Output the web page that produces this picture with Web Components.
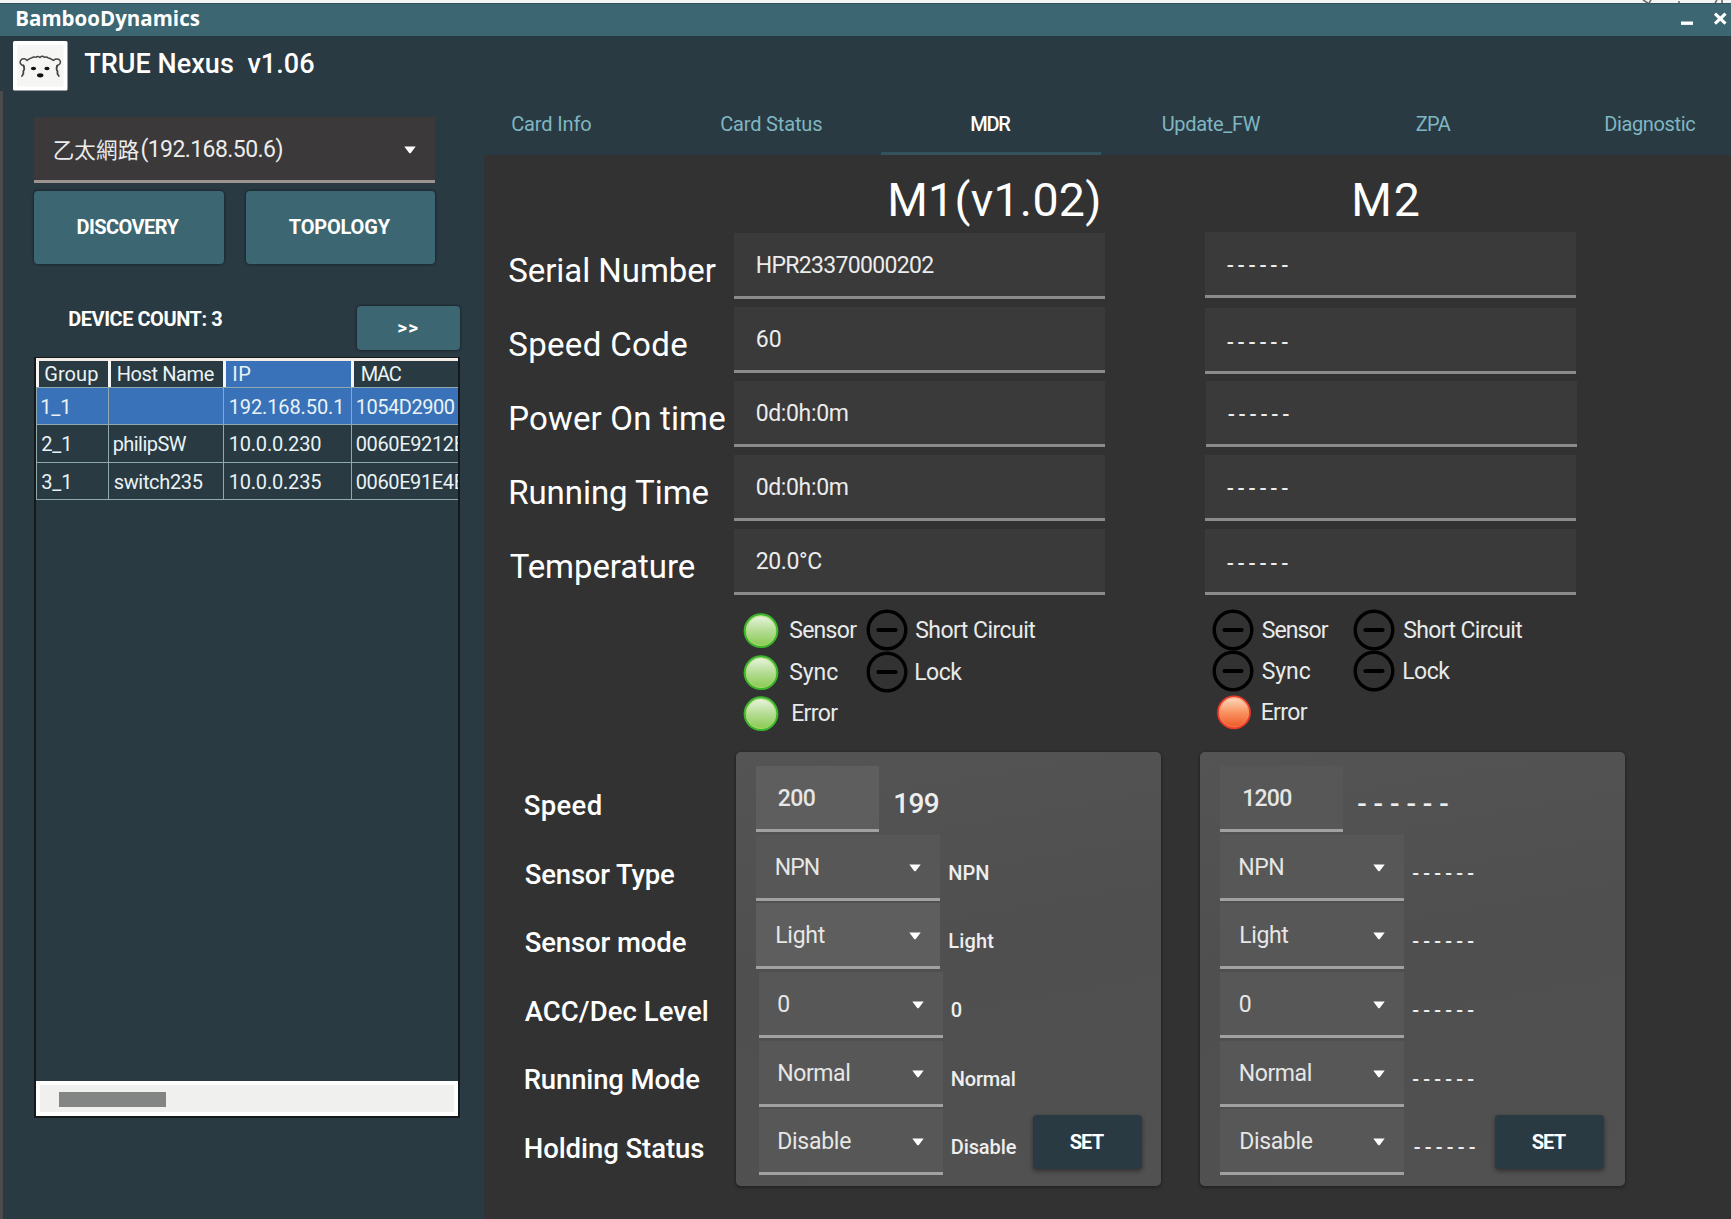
<!DOCTYPE html>
<html lang="zh-Hant">
<head>
<meta charset="utf-8">
<title>TRUE Nexus</title>
<style>
html,body{margin:0;height:100%;background:#323232}
body{font-family:Roboto,"Noto Sans CJK TC",sans-serif;color:#fff;overflow:hidden}
</style>
</head>
<body>
<nexus-app></nexus-app>
<script>
const define = (name, html, setup) => {
  const tpl = document.createElement('template');
  tpl.innerHTML = html;
  customElements.define(name, class extends HTMLElement {
    constructor() {
      super();
      this.attachShadow({mode: 'open'});
    }
    connectedCallback() {
      if (this.ready) return;
      this.ready = true;
      this.shadowRoot.append(tpl.content.cloneNode(true));
      if (setup) setup(this, this.shadowRoot);
    }
  });
};

const pen = document.createElement('canvas').getContext('2d');

/* One line of text. x: ink offset, w: ink width, base: baseline below the top, size and weight of the font. */
define('nx-text', `<style>
:host{display:block;white-space:pre;flex:none}
</style><span></span>`, (el, root) => {
  const a = n => el.getAttribute(n);
  const size = +a('size') || 20, weight = a('weight') || 400, face = a('face') || 'Roboto';
  const text = a('text'), base = +a('base');
  pen.font = `${weight} ${size}px "${face}", "Noto Sans CJK TC", sans-serif`;
  const m = pen.measureText(text);
  const ink = m.actualBoundingBoxLeft + m.actualBoundingBoxRight;
  const n = [...text].length;
  let gap = 0;
  if (a('w') && n > 1) gap = (+a('w') - ink) / (n - 1);
  const shift = face === 'Roboto' ? 0.342 : 0.388;
  const s = el.style;
  s.font = `${weight} ${size}px/${2 * (base - shift * size)}px "${face}", "Noto Sans CJK TC", sans-serif`;
  s.letterSpacing = gap + 'px';
  s.marginRight = -gap + 'px';
  s.marginLeft = (+a('x') || 0) + 0.2 + m.actualBoundingBoxLeft + 'px';
  if (a('color')) s.color = a('color');
  root.querySelector('span').textContent = text;
});

define('nx-arrow', `<style>:host{display:block;flex:none}svg{display:block}</style>
<svg width="12" height="8" viewBox="0 0 12 8"><path d="M.3.6h11.4L7 6.8q-1 1-2 0z" fill="#fff"/></svg>`);

define('nx-field', `<style>
:host{display:flex;box-sizing:border-box;flex:none;height:66px;align-items:flex-start;background:var(--bg,#3a3a3a);border-bottom:3px solid var(--line,#8b8b8b);color:#ececec}
nx-arrow{margin:29px 19px 0 auto}
:host(:not([select])) nx-arrow{display:none}
</style><slot></slot><nx-arrow></nx-arrow>`);

define('nx-button', `<style>
:host{display:flex;box-sizing:border-box;flex:none;border-radius:4px;background:#3c6671;box-shadow:0 0 2px 1px rgba(20,28,32,.55);align-items:flex-start}
:host([dark]){background:#2a3a42;box-shadow:0 2px 4px rgba(30,25,25,.6)}
</style><slot></slot>`);

define('nx-led', `<style>:host{display:block;flex:none;width:42px;height:41px}svg{display:block}</style>
<svg width="42" height="41" viewBox="0 0 42 41" overflow="visible">
<defs>
<linearGradient id="g" x2="0" y2="1"><stop offset="0" stop-color="#eef6e4"/><stop offset=".5" stop-color="#b5dc94"/><stop offset="1" stop-color="#86c94c"/></linearGradient>
<linearGradient id="r" x2="0" y2="1"><stop offset="0" stop-color="#ffe0c8"/><stop offset=".5" stop-color="#f8935f"/><stop offset="1" stop-color="#ee5426"/></linearGradient>
</defs><g></g></svg>`, (el, root) => {
  const k = el.getAttribute('kind');
  root.querySelector('g').innerHTML =
    k === 'off' ? '<circle cx="21" cy="20" r="18.8" fill="none" stroke="#000" stroke-width="3.4"/><path d="M12.500 20h17" stroke="#000" stroke-width="4.2" stroke-linecap="round"/>'
    : k === 'ok' ? '<circle cx="21" cy="20.7" r="16.3" fill="url(#g)" stroke="#3cb52c" stroke-width="2.2"/><circle cx="21" cy="20.7" r="14.7" fill="none" stroke="#a6dc70" stroke-width="1.2" opacity=".7"/>'
    : '<circle cx="22" cy="20.400" r="16" fill="url(#r)" stroke="#e8392b" stroke-width="1.8"/><circle cx="22" cy="20.400" r="14.5" fill="none" stroke="#ff8a55" stroke-width="1" opacity=".6"/>';
});

define('title-bar', `<style>
:host{display:flex;box-sizing:border-box;height:36px;background:#3c6671;border-top:3px solid #f4f4f4;align-items:flex-start;flex:none;box-shadow:inset 0 1px #31545f}
svg{display:block;margin-left:auto;margin-top:-3px}
</style>
<nx-text face="Open Sans" size="20.500" weight="700" x="16" w="183.500" base="23" text="BambooDynamics"></nx-text>
<svg width="131" height="36" viewBox="0 0 131 36"><path d="M43 0l5 3M51 0l-2 3M117 0l-2 3M122 0v3M78 2h2" stroke="#6e6a6a" stroke-width="1.6"/><path d="M81 23.200h12" stroke="#fff" stroke-width="3.4"/><path d="M115 13.700l10.500 10m0-10L115 23.700" stroke="#fff" stroke-width="3.200"/></svg>`);

define('app-header', `<style>
:host{display:flex;height:55px;background:#2a3a42;align-items:flex-start;flex:none}
svg{display:block;margin:5px 0 0 13px}
</style>
<svg width="55" height="50" viewBox="0 0 55 50"><rect width="54.500" height="49.500" rx="1.500" fill="#fff"/><rect x="4" y="4" width="46.500" height="41.500" fill="#f5f5f4"/>
<g fill="none" stroke="#444" stroke-width="1.500" stroke-linecap="round" stroke-linejoin="round">
<path d="M10.500 24.500c-3-.5-4.500-3.500-2.500-5.500s5-1.200 6 .5c1.500-1 3-2.500 5-2.800 1.500-1.200 3.200-.5 4-.5 1.200-1.200 2.800-1 4 .3 1.500-1.500 3-1.500 4.300-.3 1.500-.5 3-.3 4 .8 2 .2 3.500 1.500 5 2.500 1.500-1.700 4.500-2.300 6.300-.5s.5 5-2.300 5.500"/>
<path d="M10.500 24.500c1 2 1 4-.2 5.800.5 1.700 0 3.300-1.300 4.700M44.300 24.500c-1 2-1 4 .2 5.800-.5 1.700 0 3.300 1.300 4.700" stroke-width="1.800"/></g>
<g fill="#111"><ellipse cx="20.500" cy="27.500" rx="2.600" ry="1.700"/><ellipse cx="34" cy="27.500" rx="2.600" ry="1.700"/><ellipse cx="27.200" cy="34.300" rx="3.200" ry="2.100"/></g></svg>
<nx-text size="27" weight="500" x="16" w="230" base="37.500" text="TRUE Nexus  v1.06"></nx-text>`);

define('device-table', `<style>
:host{display:flex;flex-direction:column;box-sizing:border-box;width:426px;height:761px;border:2px solid #15191b;border-top-width:1px;background:#2a3a42;overflow:hidden;color:#e9f3f5}
.grid{display:flex;flex-direction:column;flex:1;border-top:3px solid #f3ece6}
.r{display:grid;grid-template-columns:72px 115px 128px 108px;height:36px;border-bottom:1px solid #8fa9ad}
.rows .r{height:36.300px}
.r>div{border-left:1.500px solid #8fa9ad;overflow:hidden;display:flex;align-items:flex-start}
.h{height:26px}.h>div{border-left:3px solid #f5f5f5}
.sel{background:#3a72b9}
.sb{height:35px;box-sizing:border-box;background:#f0f0ef;border:4px solid #fff;padding:7px 0 0 18.500px}
.sb i{display:block;width:107px;height:15px;background:#838584}
</style>
<div class="grid">
<div class="r h"><div><nx-text x="6" w="53" base="20" text="Group"></nx-text></div><div><nx-text x="6.500" w="96" base="20" text="Host Name"></nx-text></div><div class="sel"><nx-text x="7" w="17" base="20" text="IP"></nx-text></div><div><nx-text x="7.500" w="40" base="20" text="MAC"></nx-text></div></div>
<div class="rows"></div></div><div class="sb"><i></i></div>`, (el, root) => {
  const rows = [
    [['1_1', 27], ['', 0], ['192.168.50.1', 111.5], ['1054D2900', 98]],
    [['2_1', 28], ['philipSW', 73], ['10.0.0.230', 91.5], ['0060E9212B', 109]],
    [['3_1', 28], ['switch235', 89], ['10.0.0.235', 91.5], ['0060E91E4B', 109]]];
  root.querySelector('.rows').innerHTML = rows.map((r, i) =>
    `<div class="r${i ? '' : ' sel'}">` + r.map(([t, w], c) =>
      `<div>${t ? `<nx-text x="${[4, 4.500, 5.500, 4.500][c]}" w="${w}" base="26" text="${t}"></nx-text>` : ''}</div>`).join('') + '</div>').join('');
});

define('side-bar', `<style>
:host{display:flex;flex-direction:column;box-sizing:border-box;width:484px;flex:none;background:#2a3a42;border-left:3px solid #4b4b4b;padding:26px 0 0 31px}
.net{width:401px;--line:#9b9490;--bg:#3b3939}
.btns{display:flex;gap:22px;margin-top:8px}
.btns nx-button{width:189.500px;height:72.500px}
.count{display:flex;justify-content:space-between;align-items:flex-start;width:426px;margin-top:42.500px;height:51px}
.more{width:103px;height:44px}
</style>
<nx-field class="net" select><nx-text size="21.500" x="19.500" w="85" base="41" text="乙太網路"></nx-text><nx-text size="23" weight="400" x="2" w="141" base="41" text="(192.168.50.6)"></nx-text></nx-field>
<div class="btns"><nx-button><nx-text size="20" weight="700" x="43.300" w="102" base="43.500" text="DISCOVERY"></nx-text></nx-button><nx-button><nx-text size="20" weight="700" x="43" w="102" base="43.500" text="TOPOLOGY"></nx-text></nx-button></div>
<div class="count"><nx-text size="20" weight="700" x="35" w="153" base="20" text="DEVICE COUNT: 3"></nx-text><nx-button class="more"><nx-text size="19" weight="700" x="41" w="20" base="28" text="&gt;&gt;"></nx-text></nx-button></div>
<device-table></device-table>`);

define('tab-strip', `<style>
:host{display:flex;height:64px;background:#2a3a42;flex:none;color:#7fb6c3}
div{width:220px;box-sizing:border-box;flex:none;border-bottom:3px solid transparent;display:flex;align-items:flex-start}
div:first-of-type{width:177px}div:last-of-type{width:190px}
.on{border-color:#33535e;color:#fff}
</style>
<div><nx-text x="28" w="79" base="40" text="Card Info"></nx-text></div>
<div><nx-text x="60" w="101" base="40" text="Card Status"></nx-text></div>
<div class="on"><nx-text weight="500" x="90" w="40" base="40" text="MDR"></nx-text></div>
<div><nx-text x="61.500" w="98" base="40" text="Update_FW"></nx-text></div>
<div><nx-text x="94.500" w="35" base="40" text="ZPA"></nx-text></div>
<div><nx-text x="64" w="90" base="40" text="Diagnostic"></nx-text></div>`);

define('motor-status', `<style>
:host{display:flex}
.c{display:flex;flex-direction:column;flex:none}
.i{display:flex;height:41.200px;align-items:flex-start;color:#e8eaea}
</style>`, (el, root) => {
  const items = JSON.parse(el.getAttribute('items'));
  items.forEach(col => {
    const c = document.createElement('div');
    c.className = 'c';
    c.style.width = col.width + 'px';
    c.style.paddingLeft = col.pad + 'px';
    c.style.boxSizing = 'border-box';
    c.innerHTML = col.list.map(([kind, text, x, w]) =>
      `<div class="i"><nx-led kind="${kind}"></nx-led><nx-text size="23" x="${x}" w="${w}" base="29" text="${text}"></nx-text></div>`).join('');
    root.append(c);
  });
});

define('motor-card', `<style>
:host{display:flex;flex-direction:column;box-sizing:border-box;flex:none;width:425px;height:434px;border-radius:5px;background:linear-gradient(170deg,#535453,#4f4f4f 45%,#515151);box-shadow:0 1px 3px 1px rgba(0,0,0,.3);padding-top:14px}
.r{display:flex;align-items:flex-start;height:68.700px;padding-right:var(--right,19px)}
nx-field{--line:#a1a1a1;color:#e6e6e6}
nx-button{width:109px;height:54px;margin:6px 0 0 auto}
</style>`, (el, root) => {
  const rows = JSON.parse(el.getAttribute('rows'));
  root.innerHTML += rows.map((r, i) => `<div class="r">
<nx-field ${i ? 'select' : ''} style="width:${i ? 184 : 123}px;margin-left:${r.left}px;--bg:${r.bg || '#565756'}"><nx-text size="23" weight="${i ? 400 : 500}" x="${r.x}" w="${r.w}" base="${i ? 40.6 : 41}" text="${r.text}"></nx-text></nx-field>
<nx-text size="${i ? 20 : 28}" weight="500" x="${r.vx}" w="${r.vw}" base="${i ? 45.5 : 47.5}" text="${r.value}" color="#eee"></nx-text>
${i === 5 ? '<nx-button dark><nx-text size="20" weight="700" x="36.500" w="34" base="34" text="SET"></nx-text></nx-button>' : ''}</div>`).join('');
});

define('mdr-panel', `<style>
:host{display:flex;flex-direction:column;flex:1;background:#323232}
.top{display:flex;height:597px}
.col{display:flex;flex-direction:column;flex:none}
.lab{width:250px;padding-top:78px;box-sizing:border-box}
.lab div{height:74.100px;display:flex;align-items:flex-start}
.head{height:78px;display:flex;align-items:flex-start;flex:none}
.m1{width:371px}.m1 nx-field{margin-bottom:8.100px}
.m2{width:371px;margin-left:100px}.m2 .head{height:77px}
.m2 nx-field{margin-bottom:8px}.m2 nx-field.a{margin-bottom:10px}.m2 nx-field.b{margin-bottom:7px}
.m1 motor-status{padding-top:7px}.m2 motor-status{padding-top:7px}
.bot{display:flex;align-items:flex-start}
.names{width:252px;padding-top:14px;color:#fff}
.names div{height:68.600px;display:flex;align-items:flex-start}
.two{margin-left:39px;--right:21px}
</style>
<div class="top">
<div class="col lab">
<div><nx-text size="33" x="25" w="206.500" base="49.500" text="Serial Number"></nx-text></div>
<div><nx-text size="33" x="25" w="178" base="49.500" text="Speed Code"></nx-text></div>
<div><nx-text size="33" x="26" w="215" base="49.500" text="Power On time"></nx-text></div>
<div><nx-text size="33" x="26" w="199" base="49.500" text="Running Time"></nx-text></div>
<div><nx-text size="33" x="25.500" w="185" base="49.500" text="Temperature"></nx-text></div>
</div>
<div class="col m1">
<div class="head"><nx-text size="46.500" x="156" w="208" base="61" text="M1(v1.02)"></nx-text></div>
<nx-field><nx-text size="23" x="22.500" w="177.500" base="41" text="HPR23370000202"></nx-text></nx-field>
<nx-field><nx-text size="23" x="22.500" w="24" base="41" text="60"></nx-text></nx-field>
<nx-field><nx-text size="23" x="22.500" w="91" base="41" text="0d:0h:0m"></nx-text></nx-field>
<nx-field><nx-text size="23" x="22.500" w="91" base="41" text="0d:0h:0m"></nx-text></nx-field>
<nx-field><nx-text size="23" x="22.500" w="64.500" base="41" text="20.0°C"></nx-text></nx-field>
<motor-status items='[{"width":126,"pad":6,"list":[["ok","Sensor",7,68],["ok","Sync",7,49],["ok","Error",10,46]]},{"width":245,"pad":6,"list":[["off","Short Circuit",7,120],["off","Lock",7,47]]}]'></motor-status>
</div>
<div class="col m2">
<div class="head"><nx-text size="46.500" x="149" w="64.500" base="61" text="M2"></nx-text></div>
<nx-field class="a"><nx-text size="21" weight="500" x="21.500" w="61.500" base="40.500" text="------"></nx-text></nx-field>
<nx-field class="b"><nx-text size="21" weight="500" x="21.500" w="61.500" base="41.500" text="------"></nx-text></nx-field>
<nx-field style="position:relative;left:1px"><nx-text size="21" weight="500" x="21.500" w="61.500" base="41" text="------"></nx-text></nx-field>
<nx-field><nx-text size="21" weight="500" x="21.500" w="61.500" base="41" text="------"></nx-text></nx-field>
<nx-field><nx-text size="21" weight="500" x="21.500" w="61.500" base="42" text="------"></nx-text></nx-field>
<motor-status items='[{"width":142,"pad":6.5,"list":[["off","Sensor",8,67],["off","Sync",8,49],["bad","Error",8,46]]},{"width":229,"pad":6,"list":[["off","Short Circuit",8,119],["off","Lock",8,47]]}]'></motor-status>
</div>
</div>
<div class="bot">
<div class="names">
<div><nx-text size="27.500" weight="500" x="40.500" w="76" base="49.500" text="Speed"></nx-text></div>
<div><nx-text size="27.500" weight="500" x="41.500" w="149" base="49.500" text="Sensor Type"></nx-text></div>
<div><nx-text size="27.500" weight="500" x="41.500" w="160" base="49.500" text="Sensor mode"></nx-text></div>
<div><nx-text size="27.500" weight="500" x="40.500" w="183" base="49.500" text="ACC/Dec Level"></nx-text></div>
<div><nx-text size="27.500" weight="500" x="40.500" w="174.500" base="49.800" text="Running Mode"></nx-text></div>
<div><nx-text size="27.500" weight="500" x="40.500" w="178.500" base="49.800" text="Holding Status"></nx-text></div>
</div>
<motor-card rows='[{"left":20,"x":21.5,"w":37,"text":"200","bg":"#5d5e5d","vx":16,"vw":43.5,"value":"199"},
{"left":20,"x":19.5,"w":43,"text":"NPN","vx":9,"vw":39,"value":"NPN"},
{"left":20,"x":20,"w":48.5,"text":"Light","bg":"#5d5e5d","vx":9,"vw":45,"value":"Light"},
{"left":22.5,"x":19.5,"w":12,"text":"0","vx":9,"vw":11,"value":"0"},
{"left":22.5,"x":19.5,"w":71,"text":"Normal","vx":9,"vw":63,"value":"Normal"},
{"left":22.5,"x":19.5,"w":73,"text":"Disable","vx":9,"vw":65,"value":"Disable"}]'></motor-card>
<motor-card class="two" rows='[{"left":20,"x":23,"w":48,"text":"1200","vx":15,"vw":90,"value":"------"},
{"left":20,"x":19,"w":44,"text":"NPN","vx":8,"vw":61,"value":"------"},
{"left":20,"x":20,"w":48,"text":"Light","vx":8,"vw":61,"value":"------"},
{"left":20,"x":19.5,"w":12,"text":"0","vx":8,"vw":61,"value":"------"},
{"left":20,"x":19.5,"w":71,"text":"Normal","vx":8,"vw":61,"value":"------"},
{"left":20,"x":20,"w":72.5,"text":"Disable","vx":9.5,"vw":61,"value":"------"}]'></motor-card>
</div>`);

define('nexus-app', `<style>
:host{display:flex;flex-direction:column;width:1731px;height:1219px;overflow:hidden}
.body{display:flex;flex:1;min-height:0}
.main{display:flex;flex-direction:column;flex:1;min-width:0;overflow:hidden}
</style>
<title-bar></title-bar><app-header></app-header>
<div class="body"><side-bar></side-bar><div class="main"><tab-strip></tab-strip><mdr-panel></mdr-panel></div></div>`);
</script>
</body>
</html>
